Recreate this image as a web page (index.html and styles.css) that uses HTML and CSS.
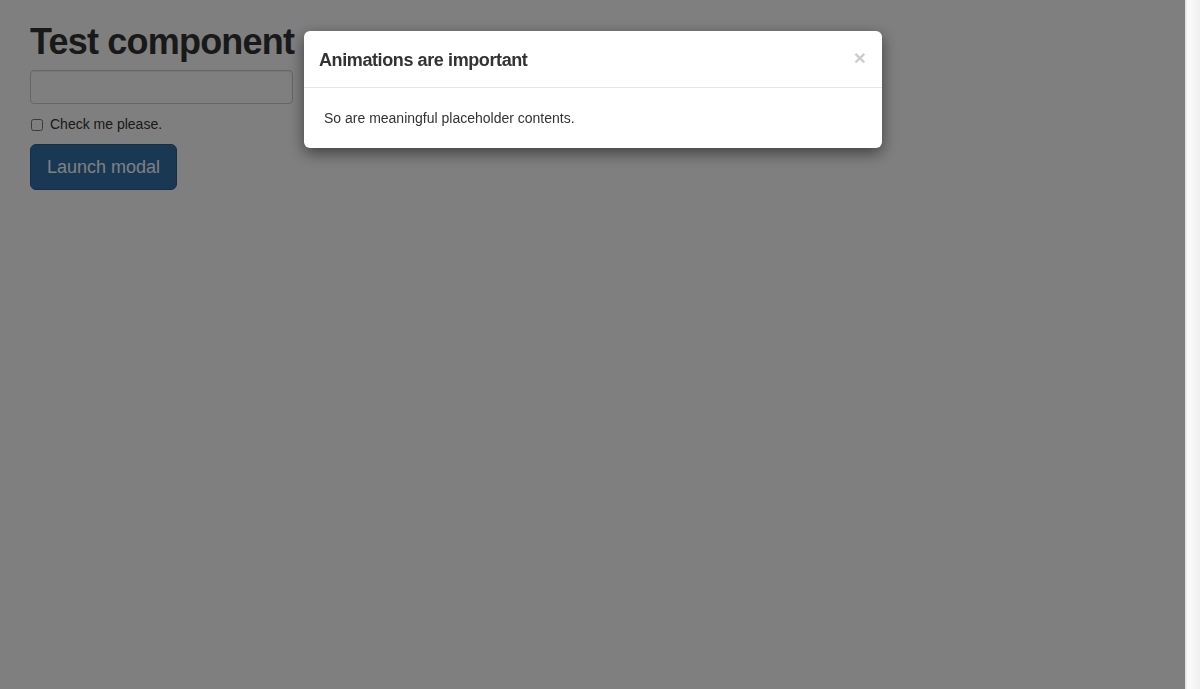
FILE: index.html
```html
<!DOCTYPE html>
<html>
<head>
<meta charset="utf-8">
<link rel="stylesheet" href="styles.css">
</head>
<body>
<div class="layout">
  <main class="page">
    <h1 class="title">Test component</h1>
    <input class="text-input" type="text">
    <div class="checkbox">
      <label><input type="checkbox"> Check me please.</label>
    </div>
    <button class="btn-primary">Launch modal</button>
  </main>
  <div class="scrollbar"></div>
</div>
<div class="backdrop"></div>
<div class="modal">
  <div class="modal-header">
    <h4 class="modal-title">Animations are important</h4>
    <span class="close">&times;</span>
  </div>
  <div class="modal-body">So are meaningful placeholder contents.</div>
</div>
</body>
</html>
```
FILE: styles.css
```css
html, body {
  margin: 0;
  padding: 0;
  height: 100%;
}
body {
  font-family: "Liberation Sans", Arial, sans-serif;
  font-size: 14px;
  line-height: 1.42857;
  color: #333;
  background: #fff;
  overflow: hidden;
}
.layout {
  display: flex;
  height: 100%;
}
.page {
  flex: 1;
  padding: 0 30px;
}
.scrollbar {
  width: 15px;
  background: linear-gradient(to right, #e2e2e2 0, #e2e2e2 1px, #fbfbfb 2px, #f7f7f7 8px, #efefef 15px);
}
.title {
  font-size: 36px;
  font-weight: bold;
  letter-spacing: -0.8px;
  line-height: 1.1;
  margin: 22px 0 8px;
  color: #333;
}
.text-input {
  display: block;
  box-sizing: border-box;
  width: 263px;
  height: 34px;
  margin: 0;
  padding: 6px 12px;
  border: 1px solid #ccc;
  border-radius: 4px;
  box-shadow: inset 0 1px 1px rgba(0,0,0,.075);
  background: #fff;
}
.checkbox {
  margin: 10px 0;
  line-height: 20px;
}
.checkbox label {
  display: block;
  padding-left: 20px;
}
.checkbox input {
  float: left;
  margin: 5px 0 0 -19px;
  width: 12px;
  height: 12px;
}
.btn-primary {
  display: block;
  font-family: inherit;
  font-size: 18px;
  line-height: 24px;
  padding: 10px 16px;
  border: 1px solid #285e8e;
  border-radius: 6px;
  background: #3071a9;
  color: #fff;
}
.backdrop {
  position: fixed;
  top: 0;
  left: 0;
  bottom: 0;
  right: 15px;
  background: rgba(0,0,0,.5);
}
.modal {
  position: fixed;
  top: 31px;
  left: 304px;
  width: 578px;
  background: #fff;
  border-radius: 6px;
  box-shadow: 0 5px 15px rgba(0,0,0,.5);
}
.modal-header {
  display: flex;
  align-items: center;
  justify-content: space-between;
  padding: 17px 15px 13px;
  border-bottom: 1px solid #e5e5e5;
}
.modal-title {
  margin: 0;
  font-size: 18px;
  font-weight: bold;
  letter-spacing: -0.4px;
  line-height: 1.42857;
  color: #333;
}
.close {
  font-size: 21px;
  font-weight: bold;
  line-height: 1;
  color: #000;
  opacity: .2;
  margin-top: -7px;
  margin-right: 1px;
}
.modal-body {
  padding: 20px;
  line-height: 20px;
}
```
